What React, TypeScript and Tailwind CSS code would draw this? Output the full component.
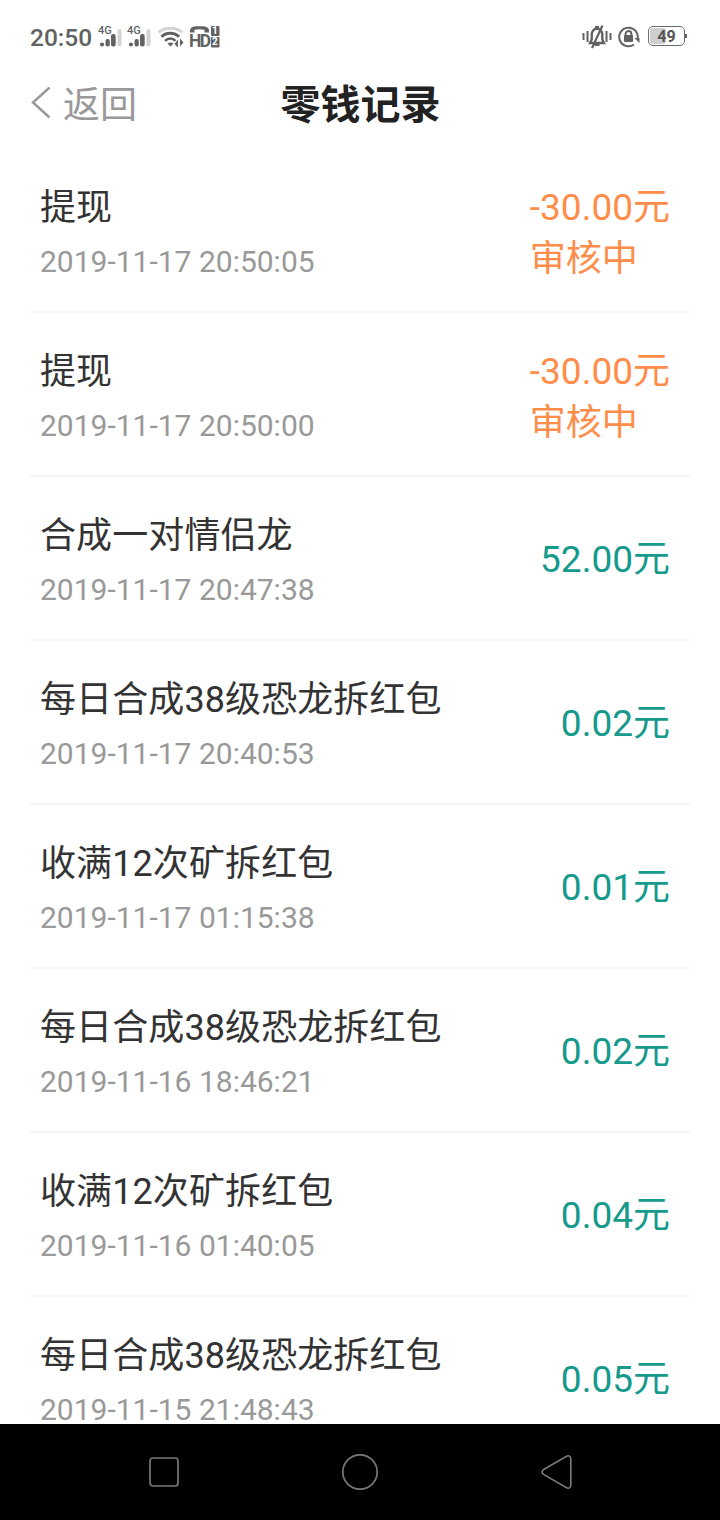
import clsx from 'clsx'

type RecordItem = {
  title: string
  time: string
  amount: string
  status?: string
}

const RECORDS: RecordItem[] = [
  { title: '提现', time: '2019-11-17 20:50:05', amount: '-30.00元', status: '审核中' },
  { title: '提现', time: '2019-11-17 20:50:00', amount: '-30.00元', status: '审核中' },
  { title: '合成一对情侣龙', time: '2019-11-17 20:47:38', amount: '52.00元' },
  { title: '每日合成38级恐龙拆红包', time: '2019-11-17 20:40:53', amount: '0.02元' },
  { title: '收满12次矿拆红包', time: '2019-11-17 01:15:38', amount: '0.01元' },
  { title: '每日合成38级恐龙拆红包', time: '2019-11-16 18:46:21', amount: '0.02元' },
  { title: '收满12次矿拆红包', time: '2019-11-16 01:40:05', amount: '0.04元' },
  { title: '每日合成38级恐龙拆红包', time: '2019-11-15 21:48:43', amount: '0.05元' },
]

function SignalIcon() {
  return (
    <div className="relative h-6 w-[26px]">
      <span className="absolute top-0 left-0 text-[11px] font-medium leading-3 text-[#626262]">4G</span>
      <svg className="absolute inset-0" width="26" height="24" viewBox="0 0 26 24" fill="#626262">
        <circle cx="4" cy="19.500" r="2.100" />
        <rect x="7.500" y="14" width="4.300" height="7.500" rx="2" />
        <rect x="13" y="9" width="4.700" height="12.500" rx="2" />
        <rect x="19.500" y="4" width="4" height="17.500" rx="2" fill="#d3d3d3" />
      </svg>
    </div>
  )
}

function WifiIcon() {
  return (
    <svg width="28" height="24" viewBox="0 0 28 24" fill="none" strokeWidth="3">
      <path d="M1.500 7.500C7.500 1.800 19.500 1.800 25.500 7.500" stroke="#d3d3d3" />
      <path d="M4.500 11.800C9 7 17.500 7 22 11.800" stroke="#626262" />
      <path d="M8 15.800C11 12.800 15.700 12.800 18.500 15.800" stroke="#626262" strokeWidth="2.600" />
      <path d="M10.500 18.500Q13.500 16.300 16.500 18.500L13.500 21.500Z" fill="#626262" />
      <path d="M21 14.500V22.500L17.500 19ZM23 13.500V21.500L26.500 17.500Z" fill="#626262" />
    </svg>
  )
}

function HdIcon() {
  return (
    <div className="relative h-6 w-8">
      <svg className="absolute inset-0" width="32" height="24" viewBox="0 0 32 24">
        <path d="M1 7.500V5Q1.500 1.700 6.500 1.200H14.500Q19.500 1.700 20 5V7.500H15.500V4.800Q10.500 3.500 5.500 4.800V7.500Z" fill="#626262" />
        <rect x="22" y="1" width="8.500" height="10" rx="1" fill="#626262" />
        <rect x="22" y="12" width="8.500" height="10.500" rx="1" fill="#626262" />
      </svg>
      <span className="absolute left-0 top-[7px] text-[17.500px] font-bold leading-[18px] tracking-[-1.500px] text-[#626262]">HD</span>
      <span className="absolute left-[23px] top-px text-[10px] font-bold leading-[10px] text-white">1</span>
      <span className="absolute left-[23px] top-3 text-[10px] font-bold leading-[10px] text-white">2</span>
    </div>
  )
}

function VibrateIcon() {
  return (
    <svg width="30" height="26" viewBox="0 0 30 26" fill="none" stroke="#626262" strokeWidth="2">
      <path d="M1.500 9V16M5.500 7V18M24.500 7V18M28.500 9V16" />
      <path d="M8 19H22L20.300 15.500V10Q19.500 5 15 4.500Q10.500 5 9.700 10V15.500Z" strokeWidth="2.400" />
      <path d="M13 3H17M12.500 21H17.500" />
      <path d="M20.500 1.500L10 24" strokeWidth="2.200" />
    </svg>
  )
}

function RotationLockIcon() {
  return (
    <svg width="22" height="24" viewBox="0 0 22 24" fill="none" stroke="#626262" strokeWidth="2">
      <path d="M16 19.500A9.300 9.300 0 1 1 19.600 14" />
      <path d="M16.500 13L21.500 13L21.500 18Z" fill="#626262" stroke="none" />
      <rect x="6" y="10" width="9" height="7" rx="1" fill="#626262" stroke="none" />
      <path d="M7.600 11V9A2.900 2.900 0 0 1 13.400 9V11" />
    </svg>
  )
}

function Battery({ level }: { level: number }) {
  return (
    <div className="flex items-center">
      <div className="relative h-[20px] w-[37px] overflow-hidden rounded-[5px] border border-[#6c6c6c] p-px">
        <div className="h-full rounded-[3px] bg-[#cfcfcf]" style={{ width: `${level}%` }} />
        <span className="absolute inset-0 text-center text-[16px] font-bold leading-[19px] text-[#555]">{level}</span>
      </div>
      <div className="h-1 w-0.5 bg-[#626262]" />
    </div>
  )
}

function StatusBar() {
  return (
    <div className="flex h-[74px] shrink-0 items-center justify-between pl-[30px] pr-[33px] text-[#626262]">
      <div className="flex items-center">
        <span className="w-[68px] pt-0.5 text-[24.500px] font-medium leading-6">20:50</span>
        <SignalIcon />
        <div className="ml-[3px]">
          <SignalIcon />
        </div>
        <div className="ml-[4px]">
          <WifiIcon />
        </div>
        <div className="ml-[4px]">
          <HdIcon />
        </div>
      </div>
      <div className="flex items-center">
        <VibrateIcon />
        <div className="ml-[6px]">
          <RotationLockIcon />
        </div>
        <div className="mb-[2px] ml-[8px]">
          <Battery level={49} />
        </div>
      </div>
    </div>
  )
}

function Header() {
  return (
    <div className="grid h-[75px] shrink-0 grid-cols-3 items-start px-[30px] pt-0.5">
      <button className="flex items-center text-[37px] leading-[60px] text-[#999]">
        <svg className="mb-1 mr-3" width="21" height="34" viewBox="0 0 21 34" fill="none" stroke="#999" strokeWidth="2.500">
          <path d="M19.500 0.500L3 15.500L19.500 30.500" />
        </svg>
        返回
      </button>
      <h1 className="pl-px text-center text-[40px] font-bold leading-[59px] text-[#222]">零钱记录</h1>
    </div>
  )
}

function RecordRow({ item }: { item: RecordItem }) {
  return (
    <li className="mx-[30px] flex h-[164px] shrink-0 items-center justify-between border-b-2 border-[#f6f6f6] pl-[10px] pr-5">
      <div className="flex flex-col pt-[9px]">
        <span className="text-[36px] leading-[52px] tracking-[0.1px] text-[#333]">{item.title}</span>
        <span className="mb-3 mt-[14px] text-[30px] leading-7 text-[#999]">{item.time}</span>
      </div>
      <div
        className={clsx(
          'flex flex-col',
          item.status ? 'pt-[6px] text-[#ff8d4a]' : 'pt-0.5 text-[#159a8c]'
        )}
      >
        <span className="text-[37px] leading-[51px]">{item.amount}</span>
        {item.status && <span className="pt-px text-[36px] leading-[51px]">{item.status}</span>}
      </div>
    </li>
  )
}

function NavBar() {
  return (
    <div className="flex h-24 shrink-0 items-center justify-around bg-black px-[66px]">
      <svg width="40" height="40" viewBox="0 0 40 40" fill="none" stroke="#777" strokeWidth="1.700">
        <rect x="6" y="6" width="28" height="28" rx="3" />
      </svg>
      <svg width="40" height="40" viewBox="0 0 40 40" fill="none" stroke="#777" strokeWidth="1.700">
        <circle cx="20" cy="20" r="17.200" />
      </svg>
      <svg width="40" height="40" viewBox="0 0 40 40" fill="none" stroke="#777" strokeWidth="1.700">
        <path d="M7.600 17.600L30.600 4.200Q34.400 2.600 34.800 7V33Q34.400 37.400 30.600 35.800L7.600 22.400Q4.400 20 7.600 17.600Z" />
      </svg>
    </div>
  )
}

export default function App() {
  return (
    <div className="flex h-[1520px] w-[720px] flex-col overflow-hidden bg-white font-['Roboto','Noto_Sans_CJK_SC',sans-serif]">
      <StatusBar />
      <Header />
      <ul className="flex min-h-0 flex-1 flex-col overflow-hidden">
        {RECORDS.map((item) => (
          <RecordRow key={item.time} item={item} />
        ))}
      </ul>
      <NavBar />
    </div>
  )
}
